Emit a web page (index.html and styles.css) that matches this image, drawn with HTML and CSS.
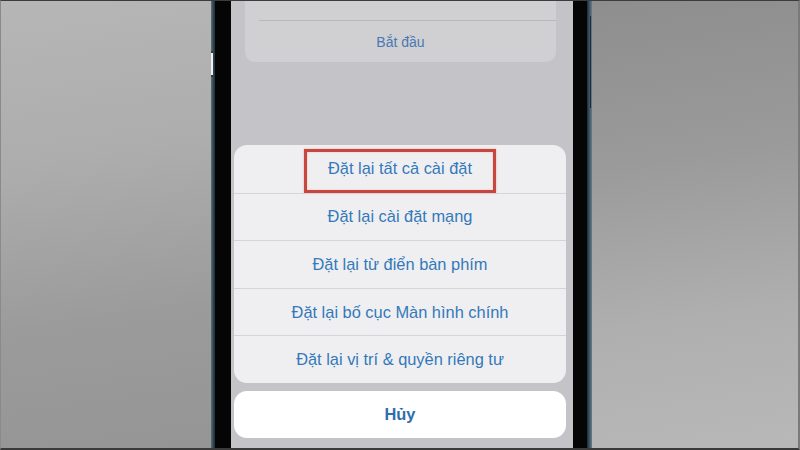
FILE: index.html
```html
<!DOCTYPE html>
<html lang="vi">
<head>
<meta charset="utf-8">
<title>Đặt lại</title>
<link rel="stylesheet" href="styles.css">
</head>
<body>
<div class="stage">
  <div class="bg bg-left"></div>
  <div class="phone">
    <div class="edge edge-left">
      <span class="btn-glint"></span>
    </div>
    <div class="bezel bezel-left"></div>
    <div class="screen">
      <div class="card">
        <div class="card-row card-row-top"></div>
        <div class="card-row card-row-action">Bắt đầu</div>
      </div>
      <div class="sheet">
        <div class="sheet-row sheet-row-first">
          <span>Đặt lại tất cả cài đặt</span>
          <span class="highlight"></span>
        </div>
        <div class="sheet-row">Đặt lại cài đặt mạng</div>
        <div class="sheet-row">Đặt lại từ điển bàn phím</div>
        <div class="sheet-row">Đặt lại bố cục Màn hình chính</div>
        <div class="sheet-row">Đặt lại vị trí &amp; quyền riêng tư</div>
      </div>
      <div class="cancel">Hủy</div>
    </div>
    <div class="bezel bezel-right"></div>
    <div class="edge edge-right">
      <span class="btn-line"></span>
    </div>
  </div>
  <div class="bg bg-right"></div>
</div>
</body>
</html>
```

FILE: styles.css
```css
html, body {
  margin: 0;
  padding: 0;
}

body {
  width: 800px;
  height: 450px;
  overflow: hidden;
  font-family: "Liberation Sans", Arial, sans-serif;
  background: #9e9e9e;
}

.stage {
  display: flex;
  width: 800px;
  height: 450px;
  box-sizing: border-box;
  border-top: 1px solid #3c3c3c;
  border-bottom: 2px solid #3a3a3a;
  border-left: 1px solid #8a8a8a;
  border-right: 2px solid #7a7a7a;
}

.bg {
  height: 100%;
}

.bg-left {
  width: 210px;
  background: linear-gradient(172deg, #b6b6b6 0%, #adadad 35%, #9b9b9b 70%, #959595 100%);
}

.bg-right {
  flex: 1;
  background: linear-gradient(172deg, #8e8e8e 0%, #9a9a9a 35%, #afafaf 70%, #b8b8b8 100%);
}

.phone {
  display: flex;
  height: 100%;
}

.edge {
  position: relative;
  height: 100%;
}

.edge-left {
  width: 4px;
  background: linear-gradient(90deg, #5d6f78, #2e4350 60%, #1d2d36);
}

.edge-right {
  width: 5px;
  background: linear-gradient(90deg, #1c2b33, #3a5362 45%, #6a7d87);
}

.btn-glint {
  position: absolute;
  left: 0;
  top: 50px;
  width: 2px;
  height: 22px;
  background: #eef0f1;
  border-top: 2px solid #2c3a42;
  border-bottom: 2px solid #2c3a42;
}

.btn-line {
  position: absolute;
  left: 3px;
  top: 15px;
  width: 1px;
  height: 92px;
  background: #1f2c33;
}

.bezel {
  height: 100%;
  background: #050505;
}

.bezel-left {
  width: 16px;
}

.bezel-right {
  width: 14px;
}

.screen {
  width: 342px;
  height: 100%;
  background: #c4c4c8;
  display: flex;
  flex-direction: column;
}

.card {
  margin: 0 17px 0 14px;
  background: #d0d0d2;
  border-radius: 0 0 10px 10px;
}

.card-row-top {
  height: 19px;
  border-bottom: 1px solid #b9b9bd;
  margin-left: 14px;
}

.card-row-action {
  height: 41px;
  display: flex;
  align-items: center;
  justify-content: center;
  font-size: 14px;
  color: #4a78b2;
}

.sheet {
  margin: 83px 7px 0 3px;
  background: #efeff1;
  border-radius: 13px;
  overflow: hidden;
}

.sheet-row {
  position: relative;
  height: 47.6px;
  display: flex;
  align-items: center;
  justify-content: center;
  font-size: 16.4px;
  color: #3379ba;
  border-top: 1px solid #d5d5d9;
  box-sizing: border-box;
}

.sheet-row-first {
  border-top: none;
}

.highlight {
  position: absolute;
  left: 70px;
  top: 4px;
  width: 192px;
  height: 44px;
  box-sizing: border-box;
  border: 3px solid #c9463e;
  box-shadow: 0 0 2px rgba(220, 90, 80, 0.45), inset 0 0 2px rgba(220, 90, 80, 0.35);
}

.cancel {
  margin: 8px 7px 0 3px;
  height: 47px;
  background: #ffffff;
  border-radius: 13px;
  display: flex;
  align-items: center;
  justify-content: center;
  font-size: 16.4px;
  font-weight: bold;
  color: #2e6eae;
}
```
